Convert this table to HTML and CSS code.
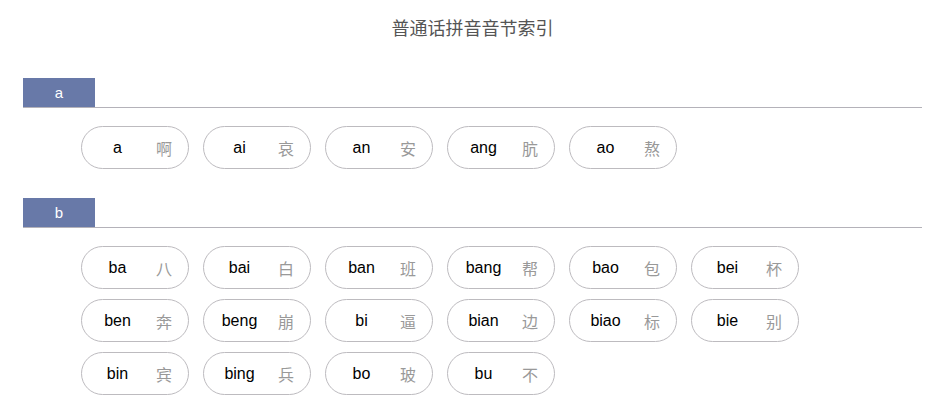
FILE: index.html
```html
<!DOCTYPE html>
<html lang="zh">
<head>
<meta charset="utf-8">
<title>普通话拼音音节索引</title>
<link rel="stylesheet" href="styles.css">
</head>
<body>
<div class="page">
  <h1 class="title">普通话拼音音节索引</h1>

  <section class="group">
    <div class="group-head"><span class="group-letter">a</span></div>
    <ul class="syllables">
      <li class="syl"><span class="py">a</span><span class="hz">啊</span></li>
      <li class="syl"><span class="py">ai</span><span class="hz">哀</span></li>
      <li class="syl"><span class="py">an</span><span class="hz">安</span></li>
      <li class="syl"><span class="py">ang</span><span class="hz">肮</span></li>
      <li class="syl"><span class="py">ao</span><span class="hz">熬</span></li>
    </ul>
  </section>

  <section class="group">
    <div class="group-head"><span class="group-letter">b</span></div>
    <ul class="syllables">
      <li class="syl"><span class="py">ba</span><span class="hz">八</span></li>
      <li class="syl"><span class="py">bai</span><span class="hz">白</span></li>
      <li class="syl"><span class="py">ban</span><span class="hz">班</span></li>
      <li class="syl"><span class="py">bang</span><span class="hz">帮</span></li>
      <li class="syl"><span class="py">bao</span><span class="hz">包</span></li>
      <li class="syl"><span class="py">bei</span><span class="hz">杯</span></li>
      <li class="syl"><span class="py">ben</span><span class="hz">奔</span></li>
      <li class="syl"><span class="py">beng</span><span class="hz">崩</span></li>
      <li class="syl"><span class="py">bi</span><span class="hz">逼</span></li>
      <li class="syl"><span class="py">bian</span><span class="hz">边</span></li>
      <li class="syl"><span class="py">biao</span><span class="hz">标</span></li>
      <li class="syl"><span class="py">bie</span><span class="hz">别</span></li>
      <li class="syl"><span class="py">bin</span><span class="hz">宾</span></li>
      <li class="syl"><span class="py">bing</span><span class="hz">兵</span></li>
      <li class="syl"><span class="py">bo</span><span class="hz">玻</span></li>
      <li class="syl"><span class="py">bu</span><span class="hz">不</span></li>
    </ul>
  </section>
</div>
</body>
</html>
```

FILE: styles.css
```css
html, body {
  margin: 0;
  padding: 0;
  background: #ffffff;
}

body {
  font-family: "Liberation Sans", Arial, "Noto Sans CJK SC", sans-serif;
  color: #000;
}

.page {
  padding: 0 20px 0 23px;
}

.title {
  margin: 0 0 40px;
  padding-top: 16px;
  font-size: 18px;
  line-height: 22px;
  font-weight: normal;
  text-align: center;
  color: #555555;
  font-family: "Noto Sans CJK SC", sans-serif;
}

.group {
  margin-bottom: 29px;
}

.group-head {
  display: flex;
  border-bottom: 1px solid #b4b2b9;
}

.group-letter {
  width: 72px;
  height: 29px;
  line-height: 29px;
  text-align: center;
  background: #6879a8;
  color: #ffffff;
  font-size: 15px;
}

.syllables {
  list-style: none;
  margin: 18px 0 0;
  padding: 0 0 0 58px;
  display: flex;
  flex-wrap: wrap;
  column-gap: 14px;
  row-gap: 10px;
  max-width: 720px;
}

.syl {
  box-sizing: border-box;
  width: 108px;
  height: 43px;
  border: 1px solid #bdbbbf;
  border-radius: 22px;
  display: flex;
  align-items: center;
}

.py {
  width: 71px;
  text-align: center;
  font-size: 16px;
  color: #000;
}

.hz {
  width: 22px;
  text-align: center;
  font-size: 16px;
  color: #999999;
  font-family: "Noto Sans CJK SC", sans-serif;
}
```
